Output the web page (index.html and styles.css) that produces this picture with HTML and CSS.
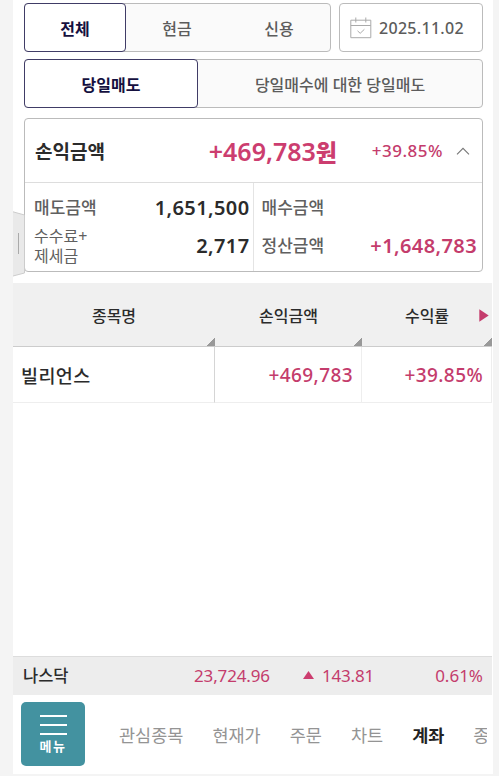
FILE: index.html
```html
<!DOCTYPE html>
<html lang="ko">
  <head>
    <title>당일매도 손익</title>
    <meta charset="utf-8" />
    <meta name="viewport" content="width=device-width, initial-scale=1" />
    <link rel="stylesheet" href="styles.css">
  </head>
  <body>
    <div class="app">
      <div class="filters">
        <div class="tabs tabs-type">
          <div class="tab active">전체</div>
          <div class="tab">현금</div>
          <div class="tab">신용</div>
        </div>
        <div class="date">
          <svg width="22" height="22" viewBox="0 0 22 22" fill="none" stroke="#aaa">
            <path d="M.8 3.2h20v17.5H.8zM.8 8.5h20M5.8.5v5M15.8.5v5" />
            <path d="M7.5 13.8l2.7 2.5 4.2-4" />
          </svg>
          <span>2025.11.02</span>
        </div>
      </div>
      <div class="tabs tabs-sell">
        <div class="tab active">당일매도</div>
        <div class="tab">당일매수에 대한 당일매도</div>
      </div>

      <div class="summary">
        <div class="summary-top">
          <span class="summary-title">손익금액</span>
          <span class="summary-total">+469,783<b>원</b></span>
          <span class="summary-rate">+39.85%</span>
          <svg width="14" height="8" viewBox="0 0 14 8" fill="none" stroke="#777" stroke-width="1.1"><path d="M1 7.3l6-6 6 6" /></svg>
        </div>
        <div class="summary-grid">
          <div class="summary-col">
            <div class="item"><span class="label">매도금액</span><span class="amount">1,651,500</span></div>
            <div class="item"><span class="label fee">수수료+<br>제세금</span><span class="amount">2,717</span></div>
          </div>
          <div class="summary-col">
            <div class="item"><span class="label">매수금액</span></div>
            <div class="item"><span class="label">정산금액</span><span class="amount up">+1,648,783</span></div>
          </div>
        </div>
      </div>

      <div class="table">
        <div class="th">종목명</div>
        <div class="th">손익금액</div>
        <div class="th">수익률</div>
        <div class="td name">빌리언스</div>
        <div class="td up">+469,783</div>
        <div class="td up">+39.85%</div>
        <svg class="next" width="10" height="13" viewBox="0 0 10 13"><path d="M.3.3v12.4L9.7 6.5z" fill="#c43c6c" /></svg>
      </div>

      <div class="ticker">
        <span class="index-name">나스닥</span>
        <span class="index-value">23,724.96</span>
        <svg width="11" height="8" viewBox="0 0 11 8"><path d="M0 8h11L5.5 0z" fill="#cc3d6f" /></svg>
        <span class="index-diff">143.81</span>
        <span class="index-rate">0.61%</span>
      </div>

      <div class="bottom">
        <div class="menu">
          <i></i><i></i><i></i>
          <span>메뉴</span>
        </div>
        <div class="nav">
          <span>관심종목</span>
          <span>현재가</span>
          <span>주문</span>
          <span>차트</span>
          <span class="on">계좌</span>
          <span>종</span>
        </div>
      </div>

      <svg class="handle" width="12" height="66" viewBox="0 0 12 66">
        <path d="M0 .8L11.5 4v58L0 65" fill="#e9e9e9" stroke="#ccc" />
        <path d="M5.5 22v21" stroke="#aaa" />
      </svg>
    </div>
  </body>
</html>
```
FILE: styles.css
```css
* {
  box-sizing: border-box;
}

body {
  margin: 0;
  height: 776px;
  overflow: hidden;
  background: #f4f4f4;
  font-family: "Noto Sans", "Noto Sans CJK KR", sans-serif;
  font-size: 17px;
  color: #2b2b2b;
}

.app {
  position: relative;
  display: flex;
  flex-direction: column;
  width: 480px;
  height: 774px;
  margin-left: 13px;
  padding-top: 3px;
  background: #fff;
}

.filters {
  display: flex;
  gap: 8px;
  margin: 0 10px 8px 11px;
}

.tabs {
  display: flex;
  height: 49px;
  border: 1px solid #bbb;
  border-radius: 4px;
  background: #fafafa;
}

.tab {
  display: flex;
  flex: 1;
  align-items: center;
  justify-content: center;
  font-size: 16px;
  font-weight: 500;
  color: #5c5c5c;
}

.tab.active {
  flex: none;
  margin: -1px 0 -1px -1px;
  border: 1px solid #403c66;
  border-radius: 4px;
  background: #fff;
  font-weight: 700;
  color: #15103f;
}

.tabs-type {
  width: 307px;
}

.tabs-type .active {
  width: 102px;
}

.date {
  display: flex;
  flex: 1;
  align-items: center;
  gap: 7px;
  height: 49px;
  padding-left: 10px;
  border: 1px solid #bbb;
  border-radius: 4px;
  font-size: 16px;
  font-weight: 500;
  letter-spacing: 0.3px;
  color: #5c5c5c;
}

.tabs-sell {
  margin: -1px 10px 11px 11px;
}

.tabs-sell .active {
  width: 174px;
}

.summary {
  height: 154px;
  margin: -1px 10px 11px 11px;
  border: 1px solid #bbb;
  border-radius: 4px;
}

.summary-top {
  display: flex;
  align-items: center;
  height: 64px;
  padding: 0 12px 0 10px;
  border-bottom: 1px solid #ddd;
}

.summary-title {
  flex: 1;
  font-size: 19px;
  font-weight: 700;
}

.summary-total {
  font-size: 25px;
  font-weight: 600;
  color: #cc3d6f;
}

.summary-total b {
  font-size: 23px;
}

.summary-rate {
  width: 106px;
  margin-right: 13px;
  font-size: 17px;
  font-weight: 500;
  letter-spacing: 0.5px;
  text-align: right;
  color: #c43c6c;
}

.summary-grid {
  display: flex;
  height: 88px;
}

.summary-col {
  flex: 1;
  padding: 6px 3px 0 9px;
}

.summary-col + .summary-col {
  padding: 6px 5px 0 8px;
  border-left: 1px solid #e4e4e4;
}

.item {
  display: flex;
  align-items: center;
  justify-content: space-between;
  height: 38px;
}

.label {
  font-size: 17px;
  line-height: 22px;
  font-weight: 500;
  color: #606060;
}

.fee {
  padding-bottom: 1px;
  font-size: 16px;
  font-weight: 400;
  line-height: 20px;
}

.amount {
  padding-bottom: 1px;
  font-size: 20px;
  font-weight: 600;
  letter-spacing: 0.4px;
}

.up {
  color: #c43c6c;
}

.table {
  position: relative;
  display: grid;
  grid-template-columns: 202px 147px 130px;
  grid-template-rows: 64px 56px;
}

.th {
  display: flex;
  align-items: center;
  justify-content: center;
  border-bottom: 1px solid #ccc;
  background: linear-gradient(135deg, transparent 50%, #999 50%) right bottom / 8px 8px no-repeat #f0f0f0;
  font-size: 16px;
  font-weight: 500;
}

.td {
  display: flex;
  align-items: center;
  justify-content: flex-end;
  padding-right: 8px;
  border-right: 1px solid #eee;
  border-bottom: 1px solid #eee;
  font-size: 19px;
  font-weight: 500;
  letter-spacing: 0.4px;
}

.name {
  justify-content: flex-start;
  padding-left: 8px;
  border-right-color: #d5d5d5;
  font-size: 18.5px;
}

.next {
  position: absolute;
  top: 26px;
  right: 4px;
}

.ticker {
  display: flex;
  align-items: center;
  height: 39px;
  margin: auto 1px 0 0;
  padding: 0 9px 2px 10px;
  border-top: 1px solid #ddd;
  background: #ededed;
  font-size: 17px;
  color: #c43c6c;
}

.index-name {
  width: 171px;
  font-size: 16.5px;
  font-weight: 500;
  color: #2b2b2b;
}

.index-value {
  width: 109px;
  letter-spacing: -0.15px;
}

.index-diff {
  margin-left: 8px;
  letter-spacing: -0.2px;
}

.index-rate {
  margin-left: auto;
}

.bottom {
  display: flex;
  align-items: center;
  height: 79px;
  padding: 0 0 1px 8px;
}

.menu {
  display: flex;
  flex-direction: column;
  align-items: center;
  gap: 7px;
  width: 64px;
  height: 64px;
  padding-top: 13px;
  border-radius: 5px;
  background: #4392a0;
}

.menu i {
  width: 27px;
  height: 2px;
  background: #fff;
}

.menu span {
  margin-top: -3px;
  font-size: 13px;
  font-weight: 700;
  line-height: 14px;
  letter-spacing: 1.5px;
  color: #fff;
}

.nav {
  display: flex;
  gap: 29px;
  width: 402px;
  padding-left: 34px;
  overflow: hidden;
  font-size: 17.5px;
  white-space: nowrap;
  color: #949494;
}

.nav .on {
  font-weight: 700;
  color: #222;
}

.handle {
  position: absolute;
  top: 211px;
  left: 0;
}
```
